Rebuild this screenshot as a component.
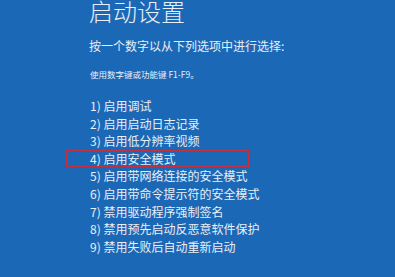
import React from 'react';

const options = [
  '1) 启用调试',
  '2) 启用启动日志记录',
  '3) 启用低分辨率视频',
  '4) 启用安全模式',
  '5) 启用带网络连接的安全模式',
  '6) 启用带命令提示符的安全模式',
  '7) 禁用驱动程序强制签名',
  '8) 禁用预先启动反恶意软件保护',
  '9) 禁用失败后自动重新启动',
];

const App = () => {
  return (
    <div
      className="w-[395px] h-[277px] overflow-hidden bg-[#1b68b6] text-[#e9eff7]"
      style={{ fontFamily: '"Noto Sans CJK SC", "Noto Sans", sans-serif' }}
    >
      <div className="pl-[89px] pt-[1px]">
        <h1 className="text-[24px] leading-[20px] font-light">启动设置</h1>

        <p className="mt-[17px] text-[12px] leading-[16px]">按一个数字以从下列选项中进行选择:</p>

        <p className="mt-[15px] pl-[1px] text-[8.5px] leading-[10px]">使用数字键或功能键 F1-F9。</p>

        <ul className="mt-[18px] text-[12px] leading-[17.6px]">
          {options.map((item, index) => (
            <li
              key={index}
              className={
                index === 3
                  ? 'box-border h-[17.6px] leading-[15.6px] -ml-[23px] pl-[23px] w-[183px] border border-[#c4303e]'
                  : 'pl-[1px]'
              }
            >
              {item}
            </li>
          ))}
        </ul>
      </div>
    </div>
  );
};

export default App;
